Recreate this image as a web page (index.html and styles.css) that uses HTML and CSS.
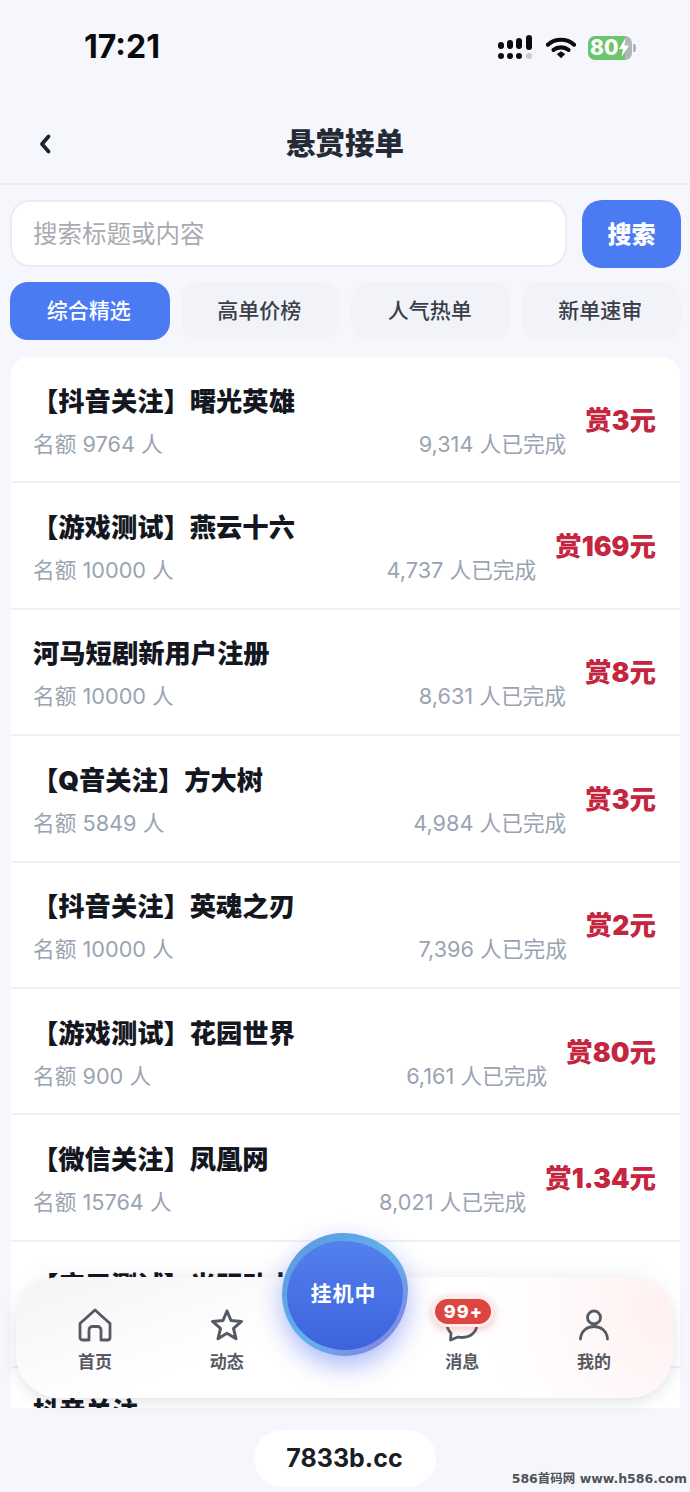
FILE: index.html
```html
<!DOCTYPE html>
<html lang="zh-CN">
<head>
    <meta charset="UTF-8">
    <meta name="viewport" content="width=device-width, initial-scale=1.0">
    <title>悬赏接单</title>
    <link rel="stylesheet" href="styles.css">
</head>
<body>
    <section class="status-bar">
        <span class="status-time">17:21</span>
        <div class="status-icons">
            <svg class="signal-icon" width="36" height="26" viewBox="0 0 36 26">
                <rect x="0" y="7" width="6" height="7" rx="3" fill="#0b0b0d"/>
                <rect x="9" y="5" width="6" height="9" rx="3" fill="#0b0b0d"/>
                <rect x="18" y="3" width="6" height="11" rx="3" fill="#0b0b0d"/>
                <rect x="28" y="0" width="6" height="15" rx="3" fill="#0b0b0d"/>
                <circle cx="3" cy="21" r="3" fill="#0b0b0d"/>
                <circle cx="12" cy="21" r="3" fill="#0b0b0d"/>
                <circle cx="21" cy="21" r="3" fill="#0b0b0d"/>
                <circle cx="31" cy="21" r="3" fill="#c9cacd"/>
            </svg>
            <svg class="wifi-icon" width="30" height="24" viewBox="0 0 32 24">
                <path d="M2 8.500C10 1.500 22 1.500 30 8.500" fill="none" stroke="#0b0b0d" stroke-width="4.400" stroke-linecap="round"/>
                <path d="M8 14C12.500 10.500 19.500 10.500 24 14" fill="none" stroke="#0b0b0d" stroke-width="4.400" stroke-linecap="round"/>
                <path d="M11.500 18.500L16 15.500L20.500 18.500L16 23Z" fill="#0b0b0d"/>
            </svg>
            <div class="battery">
                <div class="battery-body">
                    <span class="battery-text">80</span>
                    <svg class="battery-bolt" width="10" height="19" viewBox="0 0 10 19">
                        <path d="M6.500 0L0 11H4L2.500 19L10 7.500H5.500Z" fill="#ffffff"/>
                    </svg>
                </div>
                <div class="battery-cap"></div>
            </div>
        </div>
    </section>

    <header class="top-nav">
        <svg class="back-icon" width="14" height="22" viewBox="0 0 14 22">
            <path d="M10.500 3.500L4 11L10.500 18.500" fill="none" stroke="#1d2430" stroke-width="3.800" stroke-linecap="round" stroke-linejoin="round"/>
        </svg>
        <h1 class="top-title">悬赏接单</h1>
    </header>

    <section class="search-row">
        <div class="search-input">搜索标题或内容</div>
        <button class="search-button">搜索</button>
    </section>

    <nav class="tabs">
        <div class="tab tab-active">综合精选</div>
        <div class="tab">高单价榜</div>
        <div class="tab">人气热单</div>
        <div class="tab">新单速审</div>
    </nav>

    <main class="list-wrap">
        <div class="task-list">
            <div class="task-row">
                <div class="task-info">
                    <div class="task-title">【抖音关注】曙光英雄</div>
                    <div class="task-meta"><span>名额 9764 人</span><span>9,314 人已完成</span></div>
                </div>
                <div class="task-price">赏3元</div>
            </div>
            <div class="task-row">
                <div class="task-info">
                    <div class="task-title">【游戏测试】燕云十六</div>
                    <div class="task-meta"><span>名额 10000 人</span><span>4,737 人已完成</span></div>
                </div>
                <div class="task-price">赏169元</div>
            </div>
            <div class="task-row">
                <div class="task-info">
                    <div class="task-title task-title-plain">河马短剧新用户注册</div>
                    <div class="task-meta"><span>名额 10000 人</span><span>8,631 人已完成</span></div>
                </div>
                <div class="task-price">赏8元</div>
            </div>
            <div class="task-row">
                <div class="task-info">
                    <div class="task-title">【Q音关注】方大树</div>
                    <div class="task-meta"><span>名额 5849 人</span><span>4,984 人已完成</span></div>
                </div>
                <div class="task-price">赏3元</div>
            </div>
            <div class="task-row">
                <div class="task-info">
                    <div class="task-title">【抖音关注】英魂之刃</div>
                    <div class="task-meta"><span>名额 10000 人</span><span>7,396 人已完成</span></div>
                </div>
                <div class="task-price">赏2元</div>
            </div>
            <div class="task-row">
                <div class="task-info">
                    <div class="task-title">【游戏测试】花园世界</div>
                    <div class="task-meta"><span>名额 900 人</span><span>6,161 人已完成</span></div>
                </div>
                <div class="task-price">赏80元</div>
            </div>
            <div class="task-row">
                <div class="task-info">
                    <div class="task-title">【微信关注】凤凰网</div>
                    <div class="task-meta"><span>名额 15764 人</span><span>8,021 人已完成</span></div>
                </div>
                <div class="task-price">赏1.34元</div>
            </div>
            <!-- these two are mostly behind the tab bar -->
            <div class="task-row task-row-covered">
                <div class="task-title">【应用测试】光明动力</div>
            </div>
            <div class="task-row task-row-covered">
                <div class="task-title task-title-plain">抖音关注</div>
            </div>
        </div>
    </main>

    <!-- floating tab bar, sits over the list -->
    <nav class="tab-bar">
        <div class="bar-item">
            <svg width="36" height="34" viewBox="0 0 36 34">
                <path d="M3 15.500L18 2L33 15.500V29.500C33 31 32 32 30.500 32H24V22C24 20 22.500 18.500 20.500 18.500H15.500C13.500 18.500 12 20 12 22V32H5.500C4 32 3 31 3 29.500Z" fill="none" stroke="#555a62" stroke-width="2.800" stroke-linejoin="round"/>
            </svg>
            <span>首页</span>
        </div>
        <div class="bar-item">
            <svg width="34" height="34" viewBox="0 0 34 34">
                <path d="M17 3L21 12.500L31.500 13.400L23.500 20.300L26 30.800L17 25.300L8 30.800L10.500 20.300L2.500 13.400L13 12.500Z" fill="none" stroke="#555a62" stroke-width="3" stroke-linejoin="round"/>
            </svg>
            <span>动态</span>
        </div>
        <div class="bar-gap"></div>
        <div class="bar-item">
            <svg width="36" height="34" viewBox="0 0 36 34">
                <path d="M18 4C9 4 3 9 3 16C3 20 5 23 7 25L6.500 32L14 29C15.500 29.300 16.500 29.500 18 29.500C27 29.500 33 23.500 33 16C33 9 27 4 18 4Z" fill="none" stroke="#555a62" stroke-width="2.800" stroke-linejoin="round"/>
            </svg>
            <span>消息</span>
            <div class="bar-badge">99+</div>
        </div>
        <div class="bar-item">
            <svg width="34" height="34" viewBox="0 0 34 34">
                <circle cx="17" cy="9.500" r="6.500" fill="none" stroke="#555a62" stroke-width="2.800"/>
                <path d="M3.500 31C4 23 10 18.500 17 18.500C24 18.500 30 23 30.500 31" fill="none" stroke="#555a62" stroke-width="2.800" stroke-linecap="round"/>
            </svg>
            <span>我的</span>
        </div>
    </nav>

    <div class="hang-ring">
        <div class="hang-button">挂机中</div>
    </div>

    <footer class="site-footer">
        <div class="site-pill">7833b.cc</div>
    </footer>

    <div class="watermark">586首码网 www.h586.com</div>
</body>
</html>
```

FILE: styles.css
```css
* {
    box-sizing: border-box;
}
html, body {
    height: 100%;
}
body {
    position: relative;
    display: flex;
    flex-direction: column;
    width: 690px;
    height: 1492px;
    margin: 0;
    overflow: hidden;
    background-color: #f6f7fc;
    font-family: "Inter", "Noto Sans CJK SC", sans-serif;
}
.status-bar {
    display: flex;
    justify-content: space-between;
    align-items: center;
    height: 95px;
    padding: 0 54px 0 84px;
}
.status-time {
    margin-bottom: 2px;
    font-size: 32px;
    font-weight: 700;
    color: #0b0b0d;
}
.status-icons {
    display: flex;
    align-items: center;
    gap: 12px;
}
.battery {
    display: flex;
    align-items: center;
}
.battery-body {
    display: flex;
    align-items: center;
    width: 44px;
    height: 24px;
    padding-left: 2px;
    border-radius: 7px;
    background: linear-gradient(90deg, #6cc46c 0 84%, #b4b5b7 84%);
}
.battery-text {
    font-size: 21px;
    font-weight: 800;
    line-height: 24px;
    color: #ffffff;
}
.battery-bolt {
    margin-left: 1px;
}
.battery-cap {
    width: 3px;
    height: 8px;
    margin-left: 1px;
    border-radius: 0 2px 2px 0;
    background-color: #b4b5b7;
}
.top-nav {
    position: relative;
    display: flex;
    justify-content: center;
    align-items: center;
    height: 90px;
    padding-top: 4px;
    border-bottom: 2px solid #e9ebf0;
}
.back-icon {
    position: absolute;
    left: 38px;
    top: 38px;
}
.top-title {
    margin: 0;
    font-size: 29.500px;
    font-weight: 900;
    color: #252b36;
}
.search-row {
    display: flex;
    gap: 15px;
    padding: 15px 9px 0 10px;
}
.search-input {
    flex: 1;
    height: 67px;
    padding-left: 21px;
    border: 2px solid #eaecf1;
    border-radius: 20px;
    background-color: white;
    font-size: 24.500px;
    line-height: 64px;
    color: #a9abb1;
}
.search-button {
    width: 99px;
    height: 68px;
    padding: 0 0 3px;
    border: none;
    border-radius: 20px;
    background-color: #4a7bf2;
    color: white;
    font-family: inherit;
    font-size: 24px;
    font-weight: 900;
}
.tabs {
    display: grid;
    grid-template-columns: repeat(4, 1fr);
    gap: 11px;
    padding: 14px 9px 0 10px;
}
.tab {
    height: 58px;
    padding-right: 2px;
    border-radius: 18px;
    background-color: #f1f3f9;
    font-size: 21px;
    font-weight: 500;
    line-height: 58px;
    text-align: center;
    color: #3a3f49;
}
.tab-active {
    background-color: #4a7bf2;
    color: white;
}
.list-wrap {
    flex: 1;
    min-height: 0;
    margin-top: 17px;
    padding: 0 10px 0 11px;
    overflow: hidden;
}
.task-list {
    border-radius: 18px 18px 0 0;
    background-color: white;
}
.task-row {
    display: flex;
    align-items: center;
    height: 126.4px;
    padding: 0 24px 0 22px;
    border-bottom: 2px solid #f0f1f5;
}
.task-row-covered {
    align-items: flex-start;
    padding-top: 26px;
}
.task-info {
    flex: 1;
    min-width: 0;
    margin-top: 4px;
}
.task-title {
    margin-left: -1px;
    font-size: 26.300px;
    font-weight: 900;
    line-height: 36px;
    color: #14171f;
}
.task-title-plain {
    margin-left: 0;
}
.task-meta {
    display: flex;
    justify-content: space-between;
    margin-top: 9px;
    font-size: 21.700px;
    line-height: 30px;
    color: #9aa3b2;
}
.task-price {
    margin-left: 19px;
    margin-bottom: 2px;
    font-size: 26.500px;
    font-weight: 900;
    color: #c4253f;
}
.tab-bar {
    position: absolute;
    left: 16px;
    top: 1277px;
    display: flex;
    justify-content: space-between;
    align-items: flex-end;
    width: 657px;
    height: 121px;
    padding: 0 13px 24px;
    border-radius: 44px;
    background:
        radial-gradient(circle at 100% 25%, #fff0f1, rgba(255, 255, 255, 0) 28%),
        linear-gradient(160deg, #f4f4f6, #ffffff 42%);
    box-shadow: 0 6px 14px rgba(40, 50, 80, 0.10), 0 -6px 20px rgba(40, 50, 80, 0.04);
}
.bar-item {
    position: relative;
    display: flex;
    flex-direction: column;
    align-items: center;
    width: 132px;
    gap: 8px;
}
.bar-item span {
    font-size: 17px;
    font-weight: 700;
    line-height: 24px;
    color: #555a62;
}
.bar-gap {
    width: 104px;
}
.bar-badge {
    position: absolute;
    left: 36px;
    top: -12px;
    width: 62px;
    height: 31px;
    border: 3px solid #fbecea;
    border-radius: 16px;
    background-color: #dc4640;
    box-shadow: 0 2px 8px rgba(220, 70, 64, 0.35);
    font-size: 18px;
    font-weight: 800;
    line-height: 25px;
    letter-spacing: 1px;
    text-align: center;
    color: white;
}
.hang-ring {
    position: absolute;
    left: 282px;
    top: 1233px;
    width: 126px;
    height: 123px;
    padding: 8px 5px 6px 5px;
    border-radius: 48% 52% 50% 50% / 50% 46% 54% 50%;
    background: linear-gradient(135deg, #5f94e0, #5fb2ec 52%, #8f78e0);
    box-shadow: 0 10px 26px rgba(70, 100, 240, 0.45);
}
.hang-button {
    width: 100%;
    height: 100%;
    padding-right: 3px;
    border-radius: 48% 52% 50% 50% / 50% 46% 54% 50%;
    background: linear-gradient(180deg, #5480ee, #3c63dc);
    font-size: 21px;
    font-weight: 700;
    line-height: 106px;
    letter-spacing: 1px;
    text-align: center;
    color: white;
}
.site-footer {
    display: flex;
    justify-content: center;
    align-items: flex-start;
    flex: none;
    height: 84px;
    padding-top: 22px;
    margin-left: -1px;
}
.site-pill {
    width: 182px;
    height: 57px;
    border-radius: 28px;
    background-color: white;
    font-size: 25px;
    font-weight: 700;
    line-height: 57px;
    text-align: center;
    color: #1b1e25;
}
.watermark {
    position: absolute;
    right: 3px;
    bottom: 5px;
    font-family: "DejaVu Sans", "Noto Sans CJK SC", sans-serif;
    font-size: 12.500px;
    font-weight: 700;
    color: #50535a;
}
```
